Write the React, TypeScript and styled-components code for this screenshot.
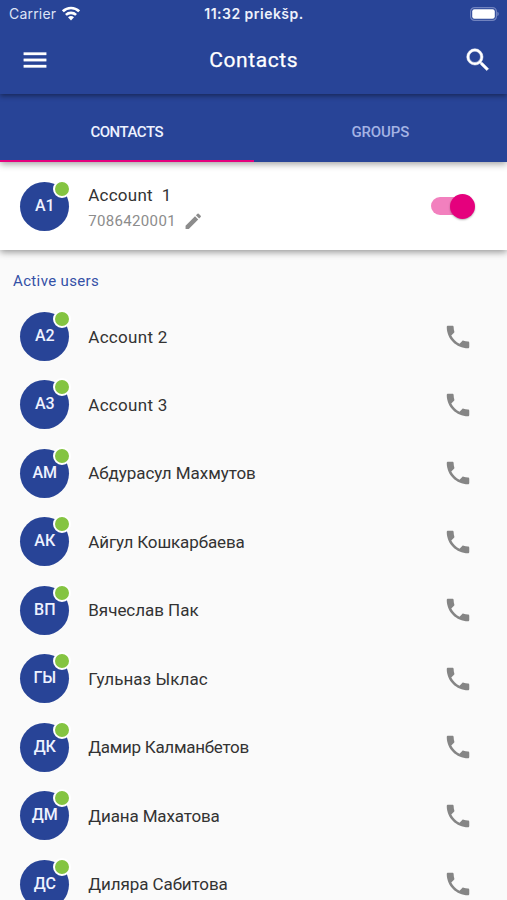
import React, { useState } from "react";
import styled, { createGlobalStyle } from "styled-components";

const BLUE = "#284497";
const PINK = "#e5007d";

const GlobalStyle = createGlobalStyle`
  *, *::before, *::after { box-sizing: border-box; }
  body {
    margin: 0;
    background: #fafafa;
    font-family: Roboto, "Noto Sans", sans-serif;
    color: #333;
  }
  button { border: 0; padding: 0; background: none; font: inherit; color: inherit; }
`;

const Screen = styled.div`
  display: flex;
  flex-direction: column;
  width: 100%;
  height: 900px;
  overflow: hidden;
  background: #fafafa;
`;

const Header = styled.header`
  position: relative;
  z-index: 3;
  flex: none;
  height: 94px;
  background: ${BLUE};
  color: #fff;
  box-shadow: 0 2px 5px rgba(0, 0, 0, 0.42);
`;

const StatusBar = styled.div`
  display: grid;
  grid-template-columns: 1fr auto 1fr;
  align-items: center;
  height: 27px;
  padding: 0 8px 0 9px;
  font: 400 14px/27px Inter, sans-serif;
`;

const Carrier = styled.div`
  display: flex;
  align-items: center;
  gap: 6px;
  letter-spacing: 0.19px;
  color: #dde3f5;
`;

const Clock = styled.div`
  font-weight: 600;
  letter-spacing: 0.48px;
  color: #eef1fb;
`;

const Battery = styled.svg`
  justify-self: end;
`;

const AppBar = styled.div`
  display: grid;
  grid-template-columns: 30px 1fr 30px;
  align-items: center;
  height: 65px;
  padding: 0 14.5px 0 20px;
`;

const Title = styled.h1`
  margin: 0 0 0 -5px;
  padding-top: 1px;
  text-align: center;
  font-size: 21px;
  line-height: 30px;
  font-weight: 400;
  letter-spacing: 0.58px;
  -webkit-text-stroke: 0.25px currentColor;
`;

const IconButton = styled.button`
  display: flex;
  width: 30px;
  height: 30px;
`;

const Glyph = styled.svg<{ $size: number; $weight: number }>`
  display: block;
  flex: none;
  width: ${(p) => p.$size}px;
  height: ${(p) => p.$size}px;
  fill: currentColor;
  stroke: currentColor;
  stroke-width: ${(p) => p.$weight};
`;

const Tabs = styled.nav`
  position: relative;
  z-index: 2;
  flex: none;
  display: grid;
  grid-template-columns: 1fr 1fr;
  height: 68px;
  background: ${BLUE};
  box-shadow: 0 2px 7px rgba(0, 0, 0, 0.38);
`;

const Tab = styled.button<{ $active: boolean; $spacing: number }>`
  padding-top: 10px;
  border-bottom: 2.5px solid ${(p) => (p.$active ? PINK : "transparent")};
  color: ${(p) => (p.$active ? "#eef2ff" : "#a4b3e4")};
  font-size: 15px;
  font-weight: 500;
  letter-spacing: ${(p) => p.$spacing}px;
`;

const AccountCard = styled.section`
  position: relative;
  z-index: 1;
  flex: none;
  display: flex;
  align-items: center;
  height: 88px;
  padding: 0 32px 0 20.3px;
  background: #fff;
  box-shadow: 0 2px 7px rgba(0, 0, 0, 0.42);
`;

const AccountText = styled.div`
  flex: 1;
  margin-left: 19px;
  padding-top: 4px;
`;

const AccountName = styled.div`
  font-size: 17px;
  line-height: 26px;
  letter-spacing: 0.23px;
  white-space: pre;
`;

const AccountNumber = styled.div`
  display: flex;
  align-items: center;
  gap: 7px;
  height: 26px;
  font-size: 15px;
  letter-spacing: 0.33px;
  color: #8c8c8c;
`;

const AvatarCircle = styled.div`
  position: relative;
  flex: none;
  display: flex;
  justify-content: center;
  width: 49px;
  height: 49px;
  border-radius: 50%;
  background: ${BLUE};
  color: #eef2ff;
  font-size: 16px;
  line-height: 48px;
  font-weight: 500;
`;

const Presence = styled.span`
  position: absolute;
  top: -2px;
  right: -2px;
  width: 18px;
  height: 18px;
  border: 2px solid #fff;
  border-radius: 50%;
  background: #84c441;
`;

const Track = styled.button<{ $on: boolean }>`
  display: flex;
  align-items: center;
  justify-content: ${(p) => (p.$on ? "flex-end" : "flex-start")};
  width: 44px;
  height: 18px;
  border-radius: 9px;
  background: ${(p) => (p.$on ? "linear-gradient(90deg, #f280be 36px, transparent 36px)" : "#bbb")};
`;

const Thumb = styled.span<{ $on: boolean }>`
  flex: none;
  width: 25px;
  height: 25px;
  border-radius: 50%;
  background: ${(p) => (p.$on ? PINK : "#fff")};
  box-shadow: 0 1px 2px rgba(0, 0, 0, 0.3);
`;

const SectionTitle = styled.h2`
  flex: none;
  margin: 0;
  padding: 18.5px 13px 0;
  height: 52.3px;
  font-size: 15px;
  line-height: 24px;
  font-weight: 400;
  letter-spacing: 0.36px;
  color: #3450a6;
`;

const ContactList = styled.ul`
  margin: 0;
  padding: 0;
  list-style: none;
`;

const ContactRow = styled.li`
  display: flex;
  align-items: center;
  height: 68.44px;
  padding: 0 34px 0 20.3px;
`;

const ContactName = styled.span<{ $spacing: number }>`
  flex: 1;
  margin-left: 19px;
  font-size: 17px;
  line-height: 24px;
  letter-spacing: ${(p) => p.$spacing}px;
`;

const CallButton = styled(IconButton)`
  color: #858585;
`;

const paths = {
  menu: "M3 18h18v-2H3v2zm0-5h18v-2H3v2zm0-7v2h18V6H3z",
  search:
    "M15.5 14h-.79l-.28-.27A6.471 6.471 0 0 0 16 9.5 6.5 6.5 0 1 0 9.5 16c1.61 0 3.09-.59 4.23-1.57l.27.28v.79l5 4.99L20.49 19l-4.99-5zm-6 0C7.01 14 5 11.99 5 9.5S7.01 5 9.5 5 14 7.01 14 9.5 11.99 14 9.5 14z",
  edit: "M3 17.25V21h3.75L17.81 9.94l-3.75-3.75L3 17.25zM20.71 7.04a.996.996 0 0 0 0-1.41l-2.34-2.34a.996.996 0 0 0-1.41 0l-1.83 1.83 3.75 3.75 1.83-1.83z",
  call: "M6.62 10.79c1.44 2.83 3.76 5.14 6.59 6.59l2.2-2.2c.27-.27.67-.36 1.02-.24 1.12.37 2.33.57 3.57.57.55 0 1 .45 1 1V20c0 .55-.45 1-1 1-9.39 0-17-7.61-17-17 0-.55.45-1 1-1h3.5c.55 0 1 .45 1 1 0 1.25.2 2.45.57 3.57.11.35.03.74-.25 1.02l-2.2 2.2z",
};

type IconProps = { name: keyof typeof paths; size?: number; weight?: number };

function Icon({ name, size = 30, weight = 0 }: IconProps) {
  return (
    <Glyph viewBox="0 0 24 24" $size={size} $weight={weight} aria-hidden>
      <path d={paths[name]} />
    </Glyph>
  );
}

function Avatar({ initials }: { initials: string }) {
  return (
    <AvatarCircle>
      {initials}
      <Presence />
    </AvatarCircle>
  );
}

const contacts = [
  { initials: "A2", name: "Account 2", spacing: 0.29 },
  { initials: "A3", name: "Account 3", spacing: 0.29 },
  { initials: "АМ", name: "Абдурасул Махмутов", spacing: -0.06 },
  { initials: "АК", name: "Айгул Кошкарбаева", spacing: -0.13 },
  { initials: "ВП", name: "Вячеслав Пак", spacing: -0.03 },
  { initials: "ГЫ", name: "Гульназ Ыклас", spacing: 0.04 },
  { initials: "ДК", name: "Дамир Калманбетов", spacing: -0.29 },
  { initials: "ДМ", name: "Диана Махатова", spacing: -0.13 },
  { initials: "ДС", name: "Диляра Сабитова", spacing: -0.08 },
];

const tabs = [
  { label: "CONTACTS", spacing: -0.5 },
  { label: "GROUPS", spacing: -0.12 },
];

export default function App() {
  const [tab, setTab] = useState(0);
  const [online, setOnline] = useState(true);

  return (
    <>
      <GlobalStyle />
      <Screen>
        <Header>
          <StatusBar>
            <Carrier>
              Carrier
              <svg width="18" height="15" viewBox="0 0 18 15" aria-hidden>
                <g fill="none" stroke="#fff" strokeWidth="2.6">
                  <path d="M0.9 5.3a11.6 11.6 0 0 1 16.2 0" />
                  <path d="M3.9 8.9a7.4 7.4 0 0 1 10.2 0" />
                </g>
                <path d="M9 14.4 6 11.3a4.4 4.4 0 0 1 6 0z" fill="#fff" />
              </svg>
            </Carrier>
            <Clock>11:32 priekšp.</Clock>
            <Battery width="29" height="14" viewBox="0 0 29 14" aria-hidden>
              <rect x="0.6" y="0.6" width="25.8" height="12.8" rx="4" fill="none" stroke="#7183bf" strokeWidth="1.2" />
              <rect x="2.2" y="2.2" width="22.6" height="9.6" rx="2.2" fill="#fff" />
              <path d="M27.3 4.8q1.5.6 1.5 2.2t-1.5 2.2z" fill="#7183bf" />
            </Battery>
          </StatusBar>
          <AppBar>
            <IconButton aria-label="Menu"><Icon name="menu" weight={0.25} /></IconButton>
            <Title>Contacts</Title>
            <IconButton aria-label="Search"><Icon name="search" weight={0.4} /></IconButton>
          </AppBar>
        </Header>
        <Tabs>
          {tabs.map((t, i) => (
            <Tab key={t.label} $active={i === tab} $spacing={t.spacing} onClick={() => setTab(i)}>
              {t.label}
            </Tab>
          ))}
        </Tabs>
        <AccountCard>
          <Avatar initials="A1" />
          <AccountText>
            <AccountName>{"Account  1"}</AccountName>
            <AccountNumber>
              7086420001
              <Icon name="edit" size={20.5} />
            </AccountNumber>
          </AccountText>
          <Track $on={online} aria-label="Availability" onClick={() => setOnline(!online)}>
            <Thumb $on={online} />
          </Track>
        </AccountCard>
        <SectionTitle>Active users</SectionTitle>
        <ContactList>
          {contacts.map((c) => (
            <ContactRow key={c.name}>
              <Avatar initials={c.initials} />
              <ContactName $spacing={c.spacing}>{c.name}</ContactName>
              <CallButton aria-label="Call"><Icon name="call" /></CallButton>
            </ContactRow>
          ))}
        </ContactList>
      </Screen>
    </>
  );
}
